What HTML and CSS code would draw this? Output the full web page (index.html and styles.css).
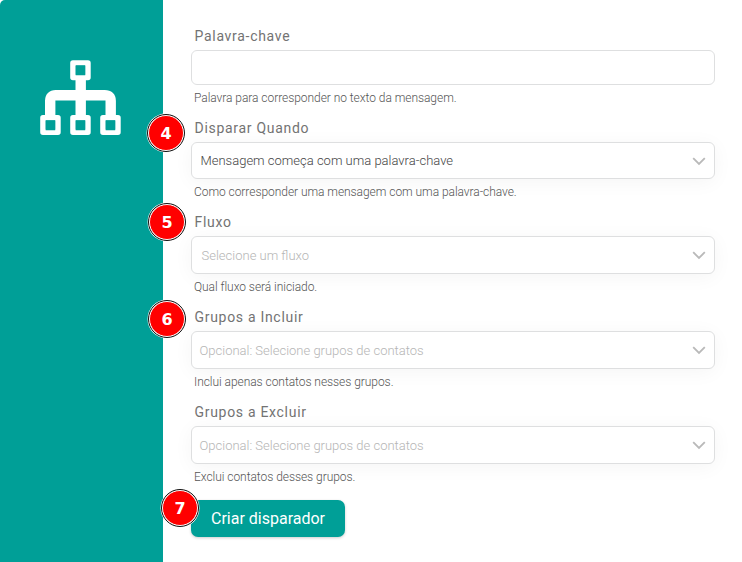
FILE: index.html
```html
<!DOCTYPE html>
<html lang="pt-BR">
<head>
<meta charset="utf-8">
<title>Criar disparador</title>
<link rel="stylesheet" href="styles.css">
</head>
<body>
<div class="dialog">
  <aside class="side">
    <svg class="flow-icon" width="82" height="76" viewBox="0.3 0.3 82 76" fill="none" stroke="#fff">
      <path d="M41 20V56M10.500 56V41Q10.500 35.500 16 35.500H65Q71 35.500 71 41V56" stroke-width="10.400"/>
      <g stroke-width="5.500" stroke-linejoin="round">
        <rect x="33.250" y="3.250" width="15" height="14.500"/>
        <rect x="3.250" y="58" width="15" height="14.500"/>
        <rect x="33.250" y="58" width="15" height="14.500"/>
        <rect x="63.250" y="58" width="15" height="14.500"/>
      </g>
      <path d="M36 5.500h9.500v10h-9.500zM6 60.500h9.500v10h-9.500zM36 60.500h9.500v10h-9.500zM66 60.500h9.500v10h-9.500z" fill="#009f97" stroke="none"/>
    </svg>
  </aside>
  <main class="form">
    <section class="field">
      <label class="label" for="keyword">Palavra-chave</label>
      <input class="box input" id="keyword" type="text">
      <p class="hint">Palavra para corresponder no texto da mensagem.</p>
    </section>
    <section class="field">
      <span class="badge badge-4">4</span>
      <span class="label">Disparar Quando</span>
      <div class="box select select-value"><span>Mensagem começa com uma palavra-chave</span><svg class="chevron" width="14" height="9" viewBox="0 0 14 9"><path d="M1.200 1.200 7 7l5.800-5.800"/></svg></div>
      <p class="hint">Como corresponder uma mensagem com uma palavra-chave.</p>
    </section>
    <section class="field">
      <span class="badge badge-5">5</span>
      <span class="label">Fluxo</span>
      <div class="box select select-flow"><span>Selecione um fluxo</span><svg class="chevron" width="14" height="9" viewBox="0 0 14 9"><path d="M1.200 1.200 7 7l5.800-5.800"/></svg></div>
      <p class="hint">Qual fluxo será iniciado.</p>
    </section>
    <section class="field">
      <span class="badge badge-6">6</span>
      <span class="label">Grupos a Incluir</span>
      <div class="box select"><span>Opcional: Selecione grupos de contatos</span><svg class="chevron" width="14" height="9" viewBox="0 0 14 9"><path d="M1.200 1.200 7 7l5.800-5.800"/></svg></div>
      <p class="hint">Inclui apenas contatos nesses grupos.</p>
    </section>
    <section class="field">
      <span class="label">Grupos a Excluir</span>
      <div class="box select"><span>Opcional: Selecione grupos de contatos</span><svg class="chevron" width="14" height="9" viewBox="0 0 14 9"><path d="M1.200 1.200 7 7l5.800-5.800"/></svg></div>
      <p class="hint">Exclui contatos desses grupos.</p>
    </section>
    <div class="actions">
      <span class="badge badge-7">7</span>
      <button class="submit" type="button">Criar disparador</button>
    </div>
  </main>
</div>
</body>
</html>
```
FILE: styles.css
```css
* { box-sizing: border-box; }
body { margin: 0; background: #fff; font-family: Roboto, sans-serif; }
.dialog { display: flex; height: 562px; overflow: hidden; background: #fff; border-top-left-radius: 5px; }
.side { width: 163px; flex: none; padding: 60px 0 0 40px; background: #009f97; }
.flow-icon { display: block; }
.form { flex: 1; padding: 22px 27px 0 28px; }
.field { position: relative; }
.label { display: block; height: 28px; padding-left: 3.5px; line-height: 28px; font-size: 14px; letter-spacing: 0.7px; color: #737373; }
.box { display: flex; width: 100%; border: 1px solid #dedfe0; border-radius: 6px; background: #fff; }
.input { height: 35px; padding: 0 9px; font: 300 13px Roboto, sans-serif; outline: none; }
.select { height: 38px; padding: 0 9px 0 7.5px; align-items: center; justify-content: space-between; font-size: 13px; font-weight: 300; color: #b5b5b5; box-shadow: 0 3px 20px rgba(0, 0, 0, 0.045); }
.select-value { height: 37px; padding-left: 8.500px; color: #444; }
.select-flow { padding-left: 9.5px; }
.chevron { position: relative; left: 0.5px; top: 0.5px; flex: none; fill: none; stroke: #b9b9b9; stroke-width: 1.8; }
.hint { height: 26px; margin: 0 0 3px; padding: 1px 0 0 3px; line-height: 25px; font-size: 12px; font-weight: 300; letter-spacing: -0.05px; color: #555; }
.actions { position: relative; padding-top: 7px; }
.submit { display: block; width: 154px; height: 37px; padding: 0; border: 0; border-radius: 7px; background: #009f97; color: #fff; font: 400 16px Roboto, sans-serif; box-shadow: 0 1px 3px rgba(0, 0, 0, 0.2); }
.badge { position: absolute; z-index: 1; display: flex; width: 36px; height: 36px; padding-top: 1px; align-items: center; justify-content: center; border: 1px solid #fff; border-radius: 50%; outline: 1px solid #111; background: #f00; box-shadow: 0 0 0 1.5px #fff; color: #fff; font: 700 16px "DejaVu Sans", sans-serif; }
.badge-4 { left: -43px; top: 1px; }
.badge-5 { left: -42px; top: -4px; }
.badge-6 { left: -42px; top: -2px; }
.badge-7 { left: -29px; top: -3px; }
```
